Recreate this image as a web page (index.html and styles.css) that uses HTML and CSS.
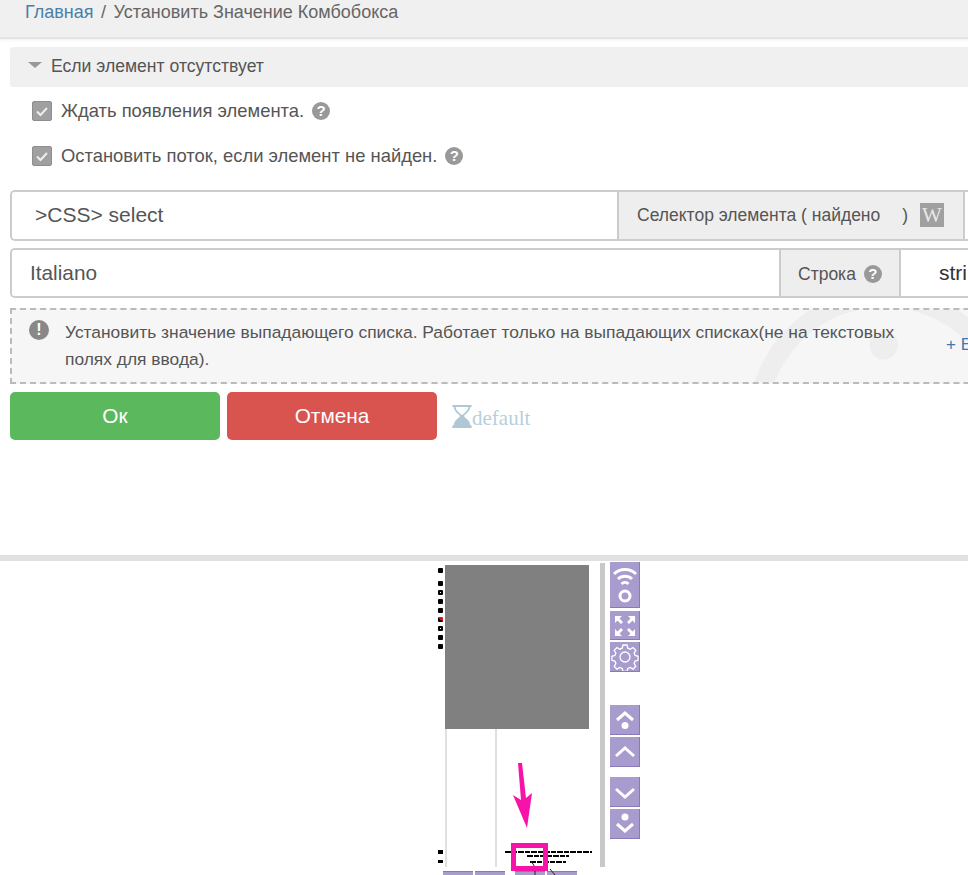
FILE: index.html
```html
<!DOCTYPE html>
<html lang="ru">
<head>
<meta charset="utf-8">
<title>Установить Значение Комбобокса</title>
<link rel="stylesheet" href="styles.css">
</head>
<body>
<div class="page">
  <nav class="crumbs"><a class="crumb-link">Главная</a><span class="crumb-sep">/</span><span>Установить Значение Комбобокса</span></nav>
  <div class="form">
    <div class="section"><span class="caret"></span>Если элемент отсутствует</div>
    <div class="checks">
      <label class="check">
        <span class="box"><svg viewBox="0 0 20 20" width="20" height="20"><path d="M5 10.500l3.500 3.500 6.500-7" fill="none" stroke="#eee" stroke-width="2"/></svg></span>
        Ждать появления элемента.
        <span class="help">?</span>
      </label>
      <label class="check">
        <span class="box"><svg viewBox="0 0 20 20" width="20" height="20"><path d="M5 10.500l3.500 3.500 6.500-7" fill="none" stroke="#eee" stroke-width="2"/></svg></span>
        Остановить поток, если элемент не найден.
        <span class="help">?</span>
      </label>
    </div>
    <div class="group group-1">
      <div class="value value-css">&gt;CSS&gt; select</div>
      <div class="addon addon-sel">Селектор элемента ( найдено <span class="paren">)</span><span class="wiki">W</span></div>
      <div class="value value-tail"></div>
    </div>
    <div class="group group-2">
      <div class="value value-it">Italiano</div>
      <div class="addon addon-str">Строка <span class="help">?</span></div>
      <div class="value value-str">string</div>
    </div>
    <div class="info">
      <svg class="watermark" viewBox="0 0 300 80" width="300" height="76"><circle cx="175" cy="122" r="133" fill="none" stroke="#eeeeee" stroke-width="20"/><circle cx="175" cy="39" r="15" fill="#eeeeee"/></svg>
      <span class="info-icon">!</span>
      <p class="info-text">Установить значение выпадающего списка. Работает только на выпадающих списках(не на текстовых полях для ввода).</p>
      <a class="more">+ Ещё</a>
    </div>
    <div class="actions">
      <button class="btn btn-ok">Ок</button>
      <button class="btn btn-cancel">Отмена</button>
      <span class="timer"><svg viewBox="0 0 20 26" width="20" height="25"><path d="M0 1h20v2h-1.500c0 5-5 7-6.500 9.500 1.500 2.500 6.500 4.500 6.500 9.500h1.500v3H0v-3h1.500c0-5 5-7 6.500-9.500C6.500 10 1.500 8 1.500 3H0z" fill="#aec8d6"/><path d="M3.500 3c0 4 4.500 6.500 6.500 8.500 2-2 6.500-4.500 6.500-8.500z" fill="#fff"/></svg>default</span>
    </div>
  </div>
  <div class="shot">
    <div class="marks">
      <i class="mark"></i><i class="mark mark-gap"></i><i class="mark mark-o"></i><i class="mark"></i><i class="mark"></i><i class="mark mark-red"></i><i class="mark mark-o"></i><i class="mark"></i><i class="mark"></i>
    </div>
    <div class="gray"></div>
    <div class="vline vline-1"></div>
    <div class="vline vline-2"></div>
    <div class="scroll"></div>
    <div class="tools">
      <button class="tool tool-tall"><svg viewBox="0 0 30 46" width="30" height="46"><g fill="none" stroke="#fff" stroke-width="3"><path d="M4 12a16 16 0 0 1 22 0"/><path d="M8 17a10 10 0 0 1 14 0"/><path d="M11.500 22a5 5 0 0 1 7 0"/><circle cx="15" cy="34" r="5"/></g></svg></button>
      <button class="tool"><svg viewBox="0 0 30 30" width="30" height="30"><g fill="#fff"><path d="M5 5h7l-2.500 2.500 3.500 3.500-2 2-3.500-3.500L5 12z"/><path d="M25 5v7l-2.500-2.500-3.500 3.500-2-2 3.500-3.500L18 5z"/><path d="M5 25v-7l2.500 2.500 3.500-3.500 2 2-3.500 3.500L12 25z"/><path d="M25 25h-7l2.500-2.500-3.500-3.500 2-2 3.500 3.500L25 18z"/></g></svg></button>
      <button class="tool"><svg viewBox="0 0 30 30" width="30" height="30"><g fill="none" stroke="#fff" stroke-width="1.300"><path d="M13 3h4l.8 3.200 2.400 1 2.800-1.700 2.800 2.800-1.700 2.800 1 2.400 3 .8v4l-3 .8-1 2.400 1.700 2.800-2.800 2.800-2.800-1.700-2.400 1-.8 3h-4l-.8-3-2.400-1-2.800 1.700-2.800-2.800 1.700-2.800-1-2.400-3-.8v-4l3-.8 1-2.400-1.700-2.800 2.800-2.800 2.800 1.700 2.400-1z"/><circle cx="15" cy="15" r="5"/></g></svg></button>
      <button class="tool tool-gap"><svg viewBox="0 0 30 30" width="30" height="30"><path d="M7 15l8-7 8 7" fill="none" stroke="#fff" stroke-width="3"/><circle cx="15" cy="20.500" r="3.500" fill="#fff"/></svg></button>
      <button class="tool"><svg viewBox="0 0 30 30" width="30" height="30"><path d="M6 19l9-8 9 8" fill="none" stroke="#fff" stroke-width="3"/></svg></button>
      <button class="tool tool-gap2"><svg viewBox="0 0 30 30" width="30" height="30"><path d="M6 12l9 8 9-8" fill="none" stroke="#fff" stroke-width="3"/></svg></button>
      <button class="tool"><svg viewBox="0 0 30 30" width="30" height="30"><circle cx="15" cy="8" r="3.500" fill="#fff"/><path d="M7 15l8 7 8-7" fill="none" stroke="#fff" stroke-width="3"/></svg></button>
    </div>
    <div class="tabs">
      <i class="tab"></i><i class="tab"></i><i class="tab tab-gap"></i><i class="tab"></i>
    </div>
    <div class="tiny tiny-1"></div>
    <div class="tiny tiny-2"></div>
    <div class="tiny tiny-3"></div>
    <svg class="arrow" viewBox="0 0 26 70" width="26" height="70"><path d="M8 3h4l4 35 6-5-5 35L3 35l8 5z" fill="#f813a8"/></svg>
    <svg class="leader" viewBox="0 0 30 14" width="30" height="14"><path d="M5 0l6 9M9 9v5M24 8l5 6" fill="none" stroke="#222" stroke-width="1"/></svg>
    <div class="highlight"></div>
    <div class="blk blk-1"></div>
    <div class="blk blk-2"></div>
  </div>
</div>
</body>
</html>
```
FILE: styles.css
```css
* { box-sizing: border-box; }
html, body { margin: 0; height: 875px; overflow: hidden; background: #fff; }
body { font-family: "Liberation Sans", Arial, sans-serif; color: #555; }
.page { width: 968px; height: 875px; overflow: hidden; }

.crumbs { height: 39px; padding: 2px 25px 0; background: #f0f0f0; border-bottom: 2px solid #e4e4e4; font-size: 18px; line-height: 20px; color: #666; box-shadow: 0 1px 3px #eee; white-space: nowrap; }
.crumb-link { color: #4a7fa8; }
.crumb-sep { padding: 0 7.500px; }

.form { height: 516px; padding: 8px 0 0 10px; width: 1200px; }
.section { height: 40px; width: 1100px; background: #f0f0f0; border-radius: 3px; font-size: 17.600px; line-height: 38px; padding-left: 41px; color: #555; position: relative; }
.caret { position: absolute; left: 18px; top: 15px; width: 0; height: 0; border-left: 7px solid transparent; border-right: 7px solid transparent; border-top: 6px solid #999; }

.checks { padding: 14px 0 0 22px; height: 103px; }
.check { display: flex; align-items: center; height: 20px; margin-bottom: 25px; font-size: 18.400px; color: #555; white-space: nowrap; }
.box { width: 20px; height: 20px; margin-right: 9px; background: #a0a0a0; border: 1px solid #8e8e8e; border-radius: 2px; display: block; }
.box svg { display: block; margin: -1px; }
.help { display: inline-block; width: 18px; height: 18px; margin-left: 8px; border-radius: 50%; background: #999; color: #fff; font-size: 15px; font-weight: 700; line-height: 18px; text-align: center; }

.group { display: flex; height: 50px; border: 2px solid #ccc; border-radius: 5px 0 0 5px; border-right: 0; margin-bottom: 8px; width: 1100px; overflow: hidden; }
.group-1 { height: 51px; margin-bottom: 7px; }
.value { background: #fff; font-size: 21px; line-height: 46px; color: #555; white-space: nowrap; }
.value-css { width: 605px; padding-left: 23px; }
.value-it { width: 767px; padding-left: 18px; font-size: 20.800px; }
.value-str { flex: 1; padding-left: 38px; color: #333; }
.value-tail { flex: 1; }
.addon { background: #eee; border-left: 2px solid #ccc; border-right: 2px solid #ccc; font-size: 17.500px; line-height: 46px; color: #555; display: flex; align-items: center; white-space: pre; }
.addon-sel { width: 348px; padding: 0 0 2px 18px; }
.paren { margin-left: 17px; }
.wiki { width: 24px; height: 24px; margin-left: 12px; background: #a0a0a0; color: #e8e8e8; font-family: "Liberation Serif", serif; font-size: 21px; line-height: 25px; text-align: center; }
.addon-str { width: 122px; padding: 1px 0 0 17px; }
.addon-str .help { margin-left: 3px; }

.info { position: relative; height: 76px; width: 1100px; margin-top: 10px; background: #f6f6f6; border: 2px dashed #bbb; border-right: 0; overflow: hidden; padding: 9px 0 0 17px; display: flex; }
.watermark { position: absolute; left: 698px; top: -2px; }
.info-icon { position: relative; width: 20px; height: 20px; margin-top: 1px; border-radius: 50%; background: #888; color: #fff; font-size: 16px; font-weight: 700; line-height: 20px; text-align: center; flex: none; }
.info-text { position: relative; margin: 0 0 0 16px; width: 840px; font-size: 17.400px; line-height: 27px; color: #555; }
.more { position: absolute; left: 934px; top: 25px; font-size: 17px; line-height: 20px; color: #3f78b0; white-space: nowrap; }

.actions { display: flex; align-items: center; margin-top: 8px; height: 48px; }
.btn { width: 210px; height: 48px; border: 0; border-radius: 5px; font-family: inherit; font-size: 20.800px; color: #fff; padding: 0; }
.btn-ok { background: #5cb85c; }
.btn-cancel { margin-left: 7px; background: #d9534f; }
.timer { display: flex; align-items: flex-end; margin-left: 15px; font-family: "Liberation Serif", serif; font-size: 21px; line-height: 21px; color: #b7cfdc; height: 25px; }

.shot { position: relative; height: 320px; border-top: 6px solid #e1e1e1; background: #fff; overflow: hidden; }
.marks { position: absolute; left: 438px; top: 7px; width: 5px; display: flex; flex-direction: column; gap: 4px; }
.mark { display: block; width: 5px; height: 5px; background: #000; border-radius: 1px; }
.mark-gap { margin-top: 4px; }
.mark-o { background: #fff; border: 2px solid #000; }
.mark-red { background: linear-gradient(45deg, #000 50%, #e0101a 50%); }
.gray { position: absolute; left: 445px; top: 4px; width: 144px; height: 164px; background: #808080; }
.vline { position: absolute; top: 168px; width: 2px; height: 138px; background: #e0e0e0; }
.vline-1 { left: 445px; }
.vline-2 { left: 495px; }
.scroll { position: absolute; left: 600px; top: 2px; width: 5px; height: 304px; background: #c8c8c8; }
.tools { position: absolute; left: 610px; top: 1px; display: flex; flex-direction: column; gap: 2px; }
.tool { width: 30px; height: 30px; padding: 0; border: 0; border-bottom: 1px solid #8a79b6; border-right: 1px solid #8a79b6; background: #a89ccf; overflow: hidden; display: block; }
.tool svg { display: block; }
.tool-tall { height: 46px; margin-bottom: 1px; }
.tools .tool:nth-child(2) { height: 29px; }
.tool-gap { margin-top: 31px; }
.tool-gap2 { margin-top: 8px; }
.tabs { position: absolute; left: 443px; top: 310px; display: flex; gap: 2px; }
.tab { display: block; width: 30px; height: 10px; background: #a89ccf; border-top: 1px solid #8a79b6; }
.tab-gap { margin-left: 8px; }
.arrow { position: absolute; left: 510px; top: 199px; }
.leader { position: absolute; left: 526px; top: 300px; }
.highlight { position: absolute; left: 511px; top: 282px; width: 37px; height: 28px; border: 5px solid #f813a8; }
.tiny { position: absolute; height: 2px; background: repeating-linear-gradient(90deg, #000 0 6px, #fff 6px 7px, #000 7px 12px, #fff 12px 13px); }
.tiny-1 { left: 505px; top: 290px; width: 87px; }
.tiny-2 { left: 527px; top: 294px; width: 42px; }
.tiny-3 { left: 530px; top: 300px; width: 36px; }
.blk { position: absolute; left: 438px; width: 5px; height: 4px; background: #000; }
.blk-1 { top: 289px; }
.blk-2 { top: 299px; height: 3px; }
```
